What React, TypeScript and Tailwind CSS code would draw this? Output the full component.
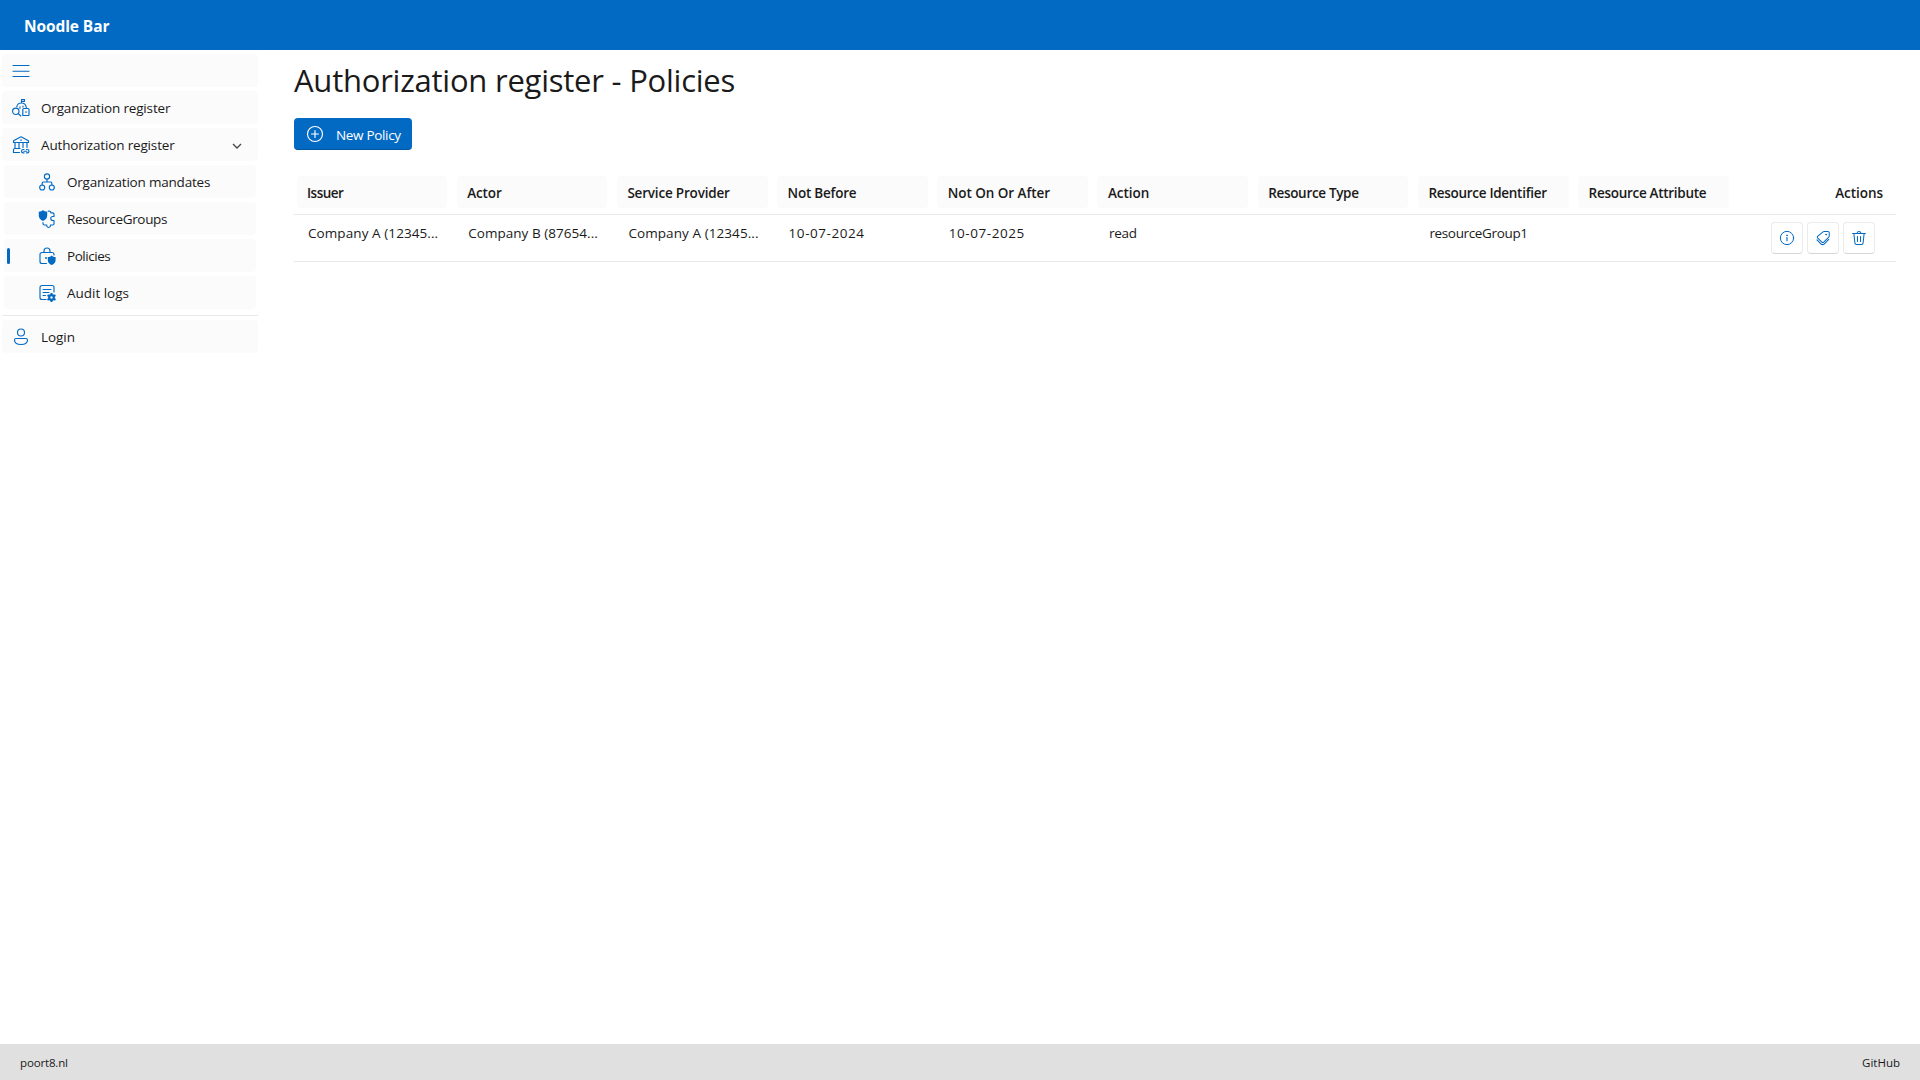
import React from 'react';
import type { ReactNode } from 'react';

function Icon({ children, className = 'size-5' }: { children: ReactNode; className?: string }) {
  return (
    <svg
      viewBox="0 0 20 20"
      fill="none"
      stroke="currentColor"
      strokeWidth="1.15"
      strokeLinecap="round"
      strokeLinejoin="round"
      className={`${className} shrink-0`}
    >
      {children}
    </svg>
  );
}

const MenuIcon = () => (
  <Icon>
    <path d="M2 4.500h16M2 10.200h16M2 15.500h16" />
  </Icon>
);

const OrganizationIcon = () => (
  <Icon>
    <path d="M10.500 5V1.500h3v1.800h-3M5.800 8.800C6.200 6.600 7.800 5 10.400 5s4.600 1.900 5 4.800M11.800 17.500V11.500a1 1 0 0 1 1-1H17a1 1 0 0 1 1 1V17a.5.5 0 0 1-.5.5zM9 8.800v1.500M12 8v1M15 13.500v1" />
    <circle cx="4.800" cy="13.300" r="3.200" />
    <path d="M7.200 15.600l2.600 2.400" />
  </Icon>
);

const BankIcon = () => (
  <Icon>
    <path d="M2.500 7.500h15V6.400a1 1 0 0 0-.5-.9l-6.500-3.600a1 1 0 0 0-1 0L3 5.500a1 1 0 0 0-.5.900zM4 7.500v6M8 7.500v6M12 7.500v5M16 7.500v5M8.500 17.500h-6V15A1.500 1.500 0 0 1 4 13.500h5" />
    <circle cx="10" cy="5" r=".3" />
    <path d="M13 14.500h-.8a1.700 1.700 0 0 0 0 3.400h.8M15.500 14.500h.8a1.700 1.700 0 0 1 0 3.400h-.8M12.800 16.200h3" />
  </Icon>
);

const HierarchyIcon = () => (
  <Icon>
    <circle cx="10" cy="4.500" r="2.600" />
    <circle cx="5.200" cy="15.500" r="2.500" />
    <circle cx="14.800" cy="15.500" r="2.500" />
    <path d="M10 7.200v2.800M5.200 12.900V11a1 1 0 0 1 1-1h7.600a1 1 0 0 1 1 1v1.900" />
  </Icon>
);

const ShieldPuzzleIcon = () => (
  <Icon>
    <path
      fill="currentColor"
      stroke="none"
      d="M6 1c1 1 2.400 1.600 4.200 1.700v3.800c0 2.700-1.500 4.400-4.200 5.500-2.700-1.100-4.200-2.800-4.200-5.500V2.700C3.600 2.600 5 2 6 1z"
    />
    <path d="M11.200 2.300a1.700 1.700 0 0 1 2.600 1.500h2a1.200 1.200 0 0 1 1.200 1.200v2.500h-1.200a2 2 0 0 0 0 4H17v3.300a1.200 1.200 0 0 1-1.200 1.200h-2.300v.6a1.900 1.900 0 0 1-3.800 0V16H7.200A1.200 1.200 0 0 1 6 14.800V13.500" />
  </Icon>
);

const LockShieldIcon = () => (
  <Icon>
    <path d="M7 6V5a3 3 0 0 1 6 0v1M9.500 17.500H5A2 2 0 0 1 3 15.500V8.500A2 2 0 0 1 5 6.500h10a2 2 0 0 1 2 2V9" />
    <circle cx="9" cy="12" r=".4" fill="currentColor" />
    <path
      fill="currentColor"
      stroke="none"
      d="M14.700 9.500c1 1 2.300 1.500 3.900 1.600v2.800c0 2.400-1.400 4-3.900 5-2.500-1-3.900-2.600-3.900-5v-2.800c1.600-.1 2.900-.6 3.900-1.600z"
    />
  </Icon>
);

const LogSettingsIcon = () => (
  <Icon>
    <path d="M9 16.500H5a2 2 0 0 1-2-2v-10a2 2 0 0 1 2-2h10a2 2 0 0 1 2 2V9M6 6.500h8M6 9.500h6M6 12.500h2.500" />
    <circle cx="14.500" cy="14.500" r="2.300" strokeWidth="2.200" />
    <path
      strokeWidth="2"
      strokeLinecap="butt"
      d="M14.500 9.900v1.800M14.500 17.300v1.800M10.500 12.200l1.600.9M16.900 15.900l1.600.9M10.500 16.800l1.600-.9M16.900 13.100l1.600-.9"
    />
  </Icon>
);

const PersonIcon = () => (
  <Icon>
    <circle cx="10" cy="5.500" r="3.500" />
    <path d="M5 11.500h10a1.500 1.500 0 0 1 1.500 1.500c0 3-3 4.500-6.500 4.500S3.500 16 3.500 13A1.500 1.500 0 0 1 5 11.500z" />
  </Icon>
);

const AddCircleIcon = () => (
  <Icon>
    <circle cx="10" cy="10" r="7.500" />
    <path d="M6.500 10h7M10 6.500v7" />
  </Icon>
);

const InfoIcon = () => (
  <Icon className="size-4">
    <circle cx="10" cy="10" r="8.300" strokeWidth="1.250" />
    <path strokeWidth="1.400" d="M10 9.300v4.200" />
    <circle cx="10" cy="6.700" r=".5" fill="currentColor" />
  </Icon>
);

const TagIcon = () => (
  <Icon className="size-4">
    <path
      strokeWidth="1.300"
      d="M11.500 1.800h4.700a1.600 1.600 0 0 1 1.600 1.600v4a2 2 0 0 1-.6 1.400l-6.300 6.300a1.700 1.700 0 0 1-2.400 0l-5-5a1.700 1.700 0 0 1 0-2.400l6.500-5.300a2 2 0 0 1 1.500-.6zM2.500 12.400l4.800 4.800a3.200 3.200 0 0 0 4.500 0l5.400-5.400"
    />
    <circle cx="13.900" cy="5.700" r=".6" fill="currentColor" />
  </Icon>
);

const TrashIcon = () => (
  <Icon className="size-4">
    <path
      strokeWidth="1.300"
      d="M2 4.300h16M7.600 4.300a2.400 2.400 0 0 1 4.800 0M3.600 4.300l1.300 12.200a2 2 0 0 0 2 1.700h6.200a2 2 0 0 0 2-1.700l1.300-12.200M8.100 8v6.500M11.900 8v6.500"
    />
  </Icon>
);

function NavItem({ icon, label, spacing, nested, active, expandable }: {
  icon: ReactNode;
  label?: string;
  spacing?: string;
  nested?: boolean;
  active?: boolean;
  expandable?: boolean;
}) {
  return (
    <a
      className={`relative flex h-[33px] items-center rounded bg-[#fbfbfb] ${
        nested ? 'mx-0.5 pl-[33px]' : 'pl-[9px]'
      }`}
    >
      {active && <span className="absolute top-[9px] left-[3px] h-4 w-[3px] rounded-full bg-[#036ac4]" />}
      <span className="text-[#036ac4]">{icon}</span>
      <span className={`ml-[10px] pt-px ${spacing ?? ''}`}>{label}</span>
      {expandable && (
        <svg viewBox="0 0 12 12" fill="none" stroke="#444" strokeWidth="1.300" className="mt-0.5 mr-[15px] ml-auto size-3">
          <path d="M2 4l4 4 4-4" />
        </svg>
      )}
    </a>
  );
}

const columns = [
  { title: 'Issuer', titleSpacing: 'tracking-[-0.5px]', value: 'Company A (12345...', valueSpacing: 'tracking-[0.08px]' },
  { title: 'Actor', titleSpacing: 'tracking-[-0.1px]', value: 'Company B (87654...', valueSpacing: 'tracking-[0.04px]' },
  { title: 'Service Provider', titleSpacing: 'tracking-[-0.19px]', value: 'Company A (12345...', valueSpacing: 'tracking-[0.08px]' },
  { title: 'Not Before', titleSpacing: 'tracking-[-0.23px]', value: '10-07-2024', valueSpacing: 'tracking-[0.55px]' },
  { title: 'Not On Or After', titleSpacing: 'tracking-[-0.06px]', value: '10-07-2025', valueSpacing: 'tracking-[0.55px]' },
  { title: 'Action', titleSpacing: 'tracking-[-0.05px]', value: 'read', valueSpacing: 'tracking-[-0.3px]' },
  { title: 'Resource Type', titleSpacing: 'tracking-[-0.32px]', value: '', valueSpacing: '' },
  { title: 'Resource Identifier', titleSpacing: 'tracking-[-0.29px]', value: 'resourceGroup1', valueSpacing: 'tracking-[-0.35px]' },
  { title: 'Resource Attribute', titleSpacing: 'tracking-[-0.29px]', value: '', valueSpacing: '' },
];

function ActionButton({ children }: { children: ReactNode }) {
  return (
    <button className="flex size-8 items-center justify-center rounded border border-[#ebebeb] border-b-[#d6d6d6] bg-white text-[#036ac4]">
      {children}
    </button>
  );
}

export default function App() {
  return (
    <div className="flex h-screen flex-col bg-white font-['Open_Sans',sans-serif] text-[13.5px] leading-5 text-[#1a1a1a]">
      <header className="flex h-[50px] shrink-0 items-center bg-[#036ac4] pt-[3px] pb-[1px] pl-6 text-[15.5px] font-bold tracking-[-0.1px] text-white">
        Noodle Bar
      </header>

      <div className="flex min-h-0 flex-1">
        <nav className="flex w-[260px] shrink-0 flex-col gap-1 px-0.5 pt-1">
          <NavItem icon={<MenuIcon />} />
          <NavItem icon={<OrganizationIcon />} label="Organization register" spacing="tracking-[-0.16px]" />
          <NavItem icon={<BankIcon />} label="Authorization register" spacing="tracking-[-0.16px]" expandable />
          <NavItem nested icon={<HierarchyIcon />} label="Organization mandates" spacing="tracking-[-0.2px]" />
          <NavItem nested icon={<ShieldPuzzleIcon />} label="ResourceGroups" spacing="tracking-[-0.33px]" />
          <NavItem nested active icon={<LockShieldIcon />} label="Policies" spacing="tracking-[-0.45px]" />
          <NavItem nested icon={<LogSettingsIcon />} label="Audit logs" spacing="tracking-[-0.02px]" />
          <hr className="mt-0.5 border-[#e9e9e9]" />
          <NavItem icon={<PersonIcon />} label="Login" spacing="tracking-[-0.05px]" />
        </nav>

        <main className="flex-1 pr-6 pl-[34px]">
          <h1 className="h-[54px] pt-2 text-[31px] leading-[44px] tracking-[-0.23px]">
            Authorization register - Policies
          </h1>
          <button className="mt-[14px] flex h-8 w-[118px] items-center rounded border-b border-[#02559d] bg-[#036ac4] pl-[11px] text-white">
            <AddCircleIcon />
            <span className="ml-[11px] pt-[3px] tracking-[-0.32px]">New Policy</span>
          </button>

          <div className="mt-6">
            <div className="grid h-[41px] grid-cols-10 border-b border-[#e9e9e9]">
              {columns.map((c) => (
                <div key={c.title} className="pt-0.5 pr-[7px] pl-[2.5px]">
                  <div className={`flex h-8 items-center rounded bg-[#fbfbfb] pt-px pl-[10.5px] font-semibold ${c.titleSpacing}`}>
                    {c.title}
                  </div>
                </div>
              ))}
              <div className="flex h-9 items-center justify-end pt-px pr-[13px] font-semibold tracking-[-0.04px]">Actions</div>
            </div>
            <div className="grid h-[47px] grid-cols-10 border-b border-[#e9e9e9]">
              {columns.map((c) => (
                <div key={c.title} className={`pt-2 pl-[14px] whitespace-nowrap ${c.valueSpacing}`}>
                  {c.value}
                </div>
              ))}
              <div className="flex justify-end gap-1 pt-[7px] pr-[21px]">
                <ActionButton><InfoIcon /></ActionButton>
                <ActionButton><TagIcon /></ActionButton>
                <ActionButton><TrashIcon /></ActionButton>
              </div>
            </div>
          </div>
        </main>
      </div>

      <footer className="flex h-9 shrink-0 items-center justify-between bg-[#e0e0e0] px-5 pt-0.5 text-[11.5px]">
        <span className="tracking-[-0.15px]">poort8.nl</span>
        <span className="tracking-[0px]">GitHub</span>
      </footer>
    </div>
  );
}
